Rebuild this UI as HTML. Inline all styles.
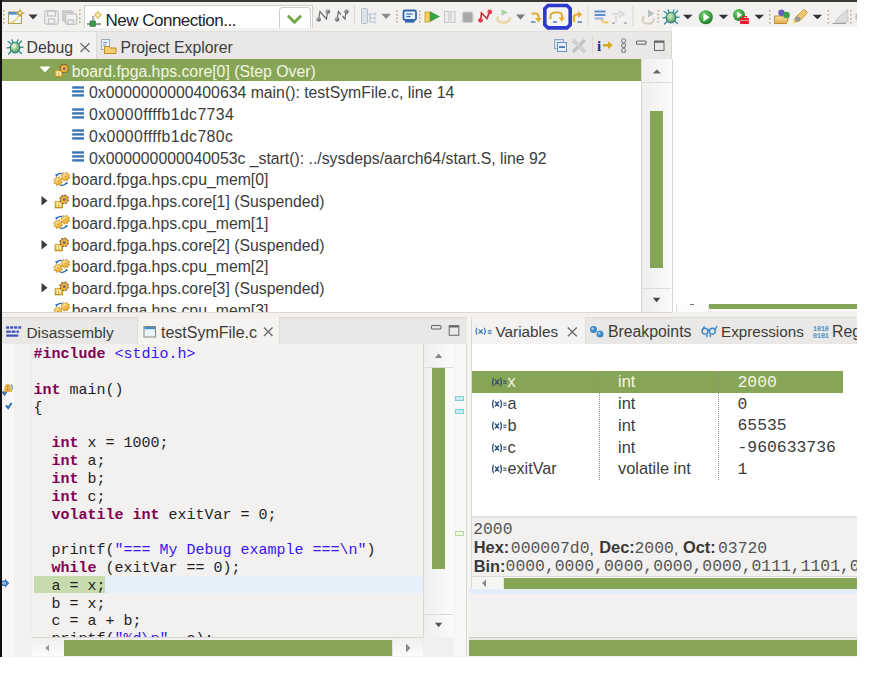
<!DOCTYPE html>
<html><head><meta charset="utf-8">
<style>
*{margin:0;padding:0;box-sizing:border-box}
html,body{width:875px;height:678px;overflow:hidden;background:#fff;position:relative}
body{font-family:"Liberation Sans",sans-serif;font-size:15.8px;color:#3c3c3c}
.a{position:absolute}
.ui{font-family:"Liberation Sans",sans-serif;font-size:15.8px;white-space:pre;line-height:18px}
.green{background:#87a556}
.cl{position:absolute;left:0;height:17.8px;line-height:17.8px;white-space:pre;font-family:"Liberation Mono",monospace;font-size:15px;color:#1f1f1f}
.kw{color:#7f0055;font-weight:bold}
.st{color:#3a14f0}
.dm{font-family:"Liberation Mono",monospace;font-size:16.4px;white-space:pre;line-height:18px;color:#555}
.db{font-family:"Liberation Sans",sans-serif;font-weight:bold;font-size:16.4px;white-space:pre;line-height:18px;color:#3a3a3a}
.dt{font-family:"Liberation Sans",sans-serif;font-size:15.2px;white-space:pre;line-height:18px;color:#3a3a3a}
.vm{font-family:"Liberation Mono",monospace;font-size:16.4px;white-space:pre;line-height:18px}
</style></head><body>
<svg width="0" height="0" style="position:absolute"><defs>
<radialGradient id="gold" cx="40%" cy="35%" r="70%"><stop offset="0" stop-color="#ffe9a0"/><stop offset="0.6" stop-color="#f0b830"/><stop offset="1" stop-color="#c98a10"/></radialGradient>
<linearGradient id="goldbox" x1="0" y1="0" x2="0" y2="1"><stop offset="0" stop-color="#f6d46a"/><stop offset="1" stop-color="#c9951c"/></linearGradient>
<symbol id="i-thread" viewBox="0 0 20 16">
 <rect x="5" y="8.2" width="7.7" height="6.8" fill="url(#goldbox)" stroke="#b08a20" stroke-width="0.6"/>
 <rect x="6.6" y="9.4" width="1.5" height="4.6" fill="#fff6c8"/><rect x="9.4" y="9.4" width="1.5" height="4.6" fill="#fff6c8"/>
 <polygon points="19.10,7.39 18.81,8.33 17.60,8.69 17.09,9.31 16.96,10.57 16.10,11.03 14.99,10.42 14.19,10.50 13.21,11.30 12.27,11.01 11.91,9.80 11.29,9.29 10.03,9.16 9.57,8.30 10.18,7.19 10.10,6.39 9.30,5.41 9.59,4.47 10.80,4.11 11.31,3.49 11.44,2.23 12.30,1.77 13.41,2.38 14.21,2.30 15.19,1.50 16.13,1.79 16.49,3.00 17.11,3.51 18.37,3.64 18.83,4.50 18.22,5.61 18.30,6.41" fill="#8a5e2a"/>
 <circle cx="14.2" cy="6.4" r="3.5" fill="#f2b640"/>
 <circle cx="14.2" cy="6.4" r="1.5" fill="#7a6a6a"/>
</symbol>
<symbol id="i-frame" viewBox="0 0 20 16">
 <rect x="2.2" y="2.3" width="11.8" height="2.4" fill="#3b74b4"/>
 <rect x="2.2" y="6.2" width="11.8" height="2.4" fill="#3b74b4"/>
 <rect x="2.2" y="10.2" width="11.8" height="2.4" fill="#3b74b4"/>
</symbol>
<symbol id="i-mem" viewBox="-2 0 20 16">
 <path d="M4.5 4.5 Q7 1.8 10.5 2.6" fill="none" stroke="#2f6db5" stroke-width="1.4"/>
 <polygon points="3,3.5 6,3 4.6,6" fill="#2f6db5"/>
 <path d="M8.5 14.3 Q12.5 15 14.5 11.8" fill="none" stroke="#2f6db5" stroke-width="1.4"/>
 <polygon points="16,12.8 13,13.4 14.6,10.4" fill="#2f6db5"/>
 <polygon points="17.81,6.49 17.55,7.34 16.14,7.44 15.72,7.94 15.89,9.35 15.11,9.76 14.03,8.84 13.39,8.90 12.51,10.01 11.66,9.75 11.56,8.34 11.06,7.92 9.65,8.09 9.24,7.31 10.16,6.23 10.10,5.59 8.99,4.71 9.25,3.86 10.66,3.76 11.08,3.26 10.91,1.85 11.69,1.44 12.77,2.36 13.41,2.30 14.29,1.19 15.14,1.45 15.24,2.86 15.74,3.28 17.15,3.11 17.56,3.89 16.64,4.97 16.70,5.61" fill="url(#gold)" stroke="#c08a30" stroke-width="0.6"/>
 <circle cx="13.4" cy="5.6" r="1" fill="#d9a040"/>
 <polygon points="10.51,11.09 10.25,11.94 8.84,12.04 8.42,12.54 8.59,13.95 7.81,14.36 6.73,13.44 6.09,13.50 5.21,14.61 4.36,14.35 4.26,12.94 3.76,12.52 2.35,12.69 1.94,11.91 2.86,10.83 2.80,10.19 1.69,9.31 1.95,8.46 3.36,8.36 3.78,7.86 3.61,6.45 4.39,6.04 5.47,6.96 6.11,6.90 6.99,5.79 7.84,6.05 7.94,7.46 8.44,7.88 9.85,7.71 10.26,8.49 9.34,9.57 9.40,10.21" fill="url(#gold)" stroke="#c08a30" stroke-width="0.6"/>
 <circle cx="6.1" cy="10.2" r="1" fill="#d9a040"/>
</symbol>
<symbol id="i-var" viewBox="0 0 18 12">
 <path d="M2.6 1.8 Q0.6 6 2.6 10.2 M9.4 1.8 Q11.4 6 9.4 10.2 M4 3.5 L8 8.5 M8 3.5 L4 8.5" stroke="#34507a" stroke-width="1.3" fill="none"/>
 <rect x="12.3" y="4.6" width="3.2" height="1.1" fill="#34507a"/><rect x="12.3" y="6.7" width="3.2" height="1.1" fill="#34507a"/>
</symbol>
<symbol id="i-vars" viewBox="0 0 18 12">
 <path d="M2.6 1.8 Q0.6 6 2.6 10.2 M9.4 1.8 Q11.4 6 9.4 10.2 M4 3.5 L8 8.5 M8 3.5 L4 8.5" stroke="#3a5070" stroke-width="1.3" fill="none"/>
 <rect x="12.3" y="4.6" width="3.2" height="1.1" fill="#3a5070"/><rect x="12.3" y="6.7" width="3.2" height="1.1" fill="#3a5070"/>
</symbol>
</defs></svg>
<!-- top dark border -->
<div class="a" style="left:0;top:0;width:857px;height:2px;background:#3a3935"></div>
<!-- window bg -->
<div class="a" style="left:0;top:2px;width:857px;height:25px;background:#f2f1f0"></div>
<div class="a" style="left:0;top:27px;width:672px;height:290px;background:#f2f1f0"></div>
<div class="a" style="left:0;top:311px;width:857px;height:346px;background:#f2f1f0"></div>
<!-- left dark border -->
<div class="a" style="left:0;top:0;width:1.8px;height:657px;background:#111"></div>

<svg class="a" style="left:0;top:0" width="875" height="32">
<defs>
<linearGradient id="gball" x1="0" y1="0" x2="1" y2="1"><stop offset="0" stop-color="#cfcfcf"/><stop offset="1" stop-color="#4a4a4a"/></linearGradient>
<radialGradient id="grun" cx="40%" cy="35%" r="70%"><stop offset="0" stop-color="#7fd27a"/><stop offset="0.7" stop-color="#2f9a3a"/><stop offset="1" stop-color="#1c6e26"/></radialGradient>
<linearGradient id="gfold" x1="0" y1="0" x2="0" y2="1"><stop offset="0" stop-color="#fbe3a0"/><stop offset="1" stop-color="#e3aa4a"/></linearGradient>
<radialGradient id="gbug2" cx="40%" cy="35%" r="70%"><stop offset="0" stop-color="#d8f0c0"/><stop offset="1" stop-color="#4a9a60"/></radialGradient>
</defs>
<!-- grip dots -->
<g fill="#bcae8c">
<rect x="3" y="10" width="1.6" height="1.6"/><rect x="3" y="14" width="1.6" height="1.6"/><rect x="3" y="18" width="1.6" height="1.6"/><rect x="3" y="22" width="1.6" height="1.6"/>
<rect x="79" y="9.5" width="1.6" height="1.6"/><rect x="79" y="13.5" width="1.6" height="1.6"/><rect x="79" y="17.5" width="1.6" height="1.6"/><rect x="79" y="21.5" width="1.6" height="1.6"/>
<rect x="396" y="10.5" width="1.6" height="1.6"/><rect x="396" y="14" width="1.6" height="1.6"/><rect x="396" y="17.5" width="1.6" height="1.6"/><rect x="396" y="21" width="1.6" height="1.6"/>
<rect x="419" y="10.5" width="1.6" height="1.6"/><rect x="419" y="14" width="1.6" height="1.6"/><rect x="419" y="17.5" width="1.6" height="1.6"/><rect x="419" y="21" width="1.6" height="1.6"/>
<rect x="657.5" y="10" width="1.6" height="1.6"/><rect x="657.5" y="13.7" width="1.6" height="1.6"/><rect x="657.5" y="17.4" width="1.6" height="1.6"/><rect x="657.5" y="21" width="1.6" height="1.6"/>
<rect x="769" y="10" width="1.6" height="1.6"/><rect x="769" y="14" width="1.6" height="1.6"/><rect x="769" y="18" width="1.6" height="1.6"/><rect x="769" y="22" width="1.6" height="1.6"/>
<rect x="827.5" y="10" width="1.6" height="1.6"/><rect x="827.5" y="14" width="1.6" height="1.6"/><rect x="827.5" y="18" width="1.6" height="1.6"/><rect x="827.5" y="22" width="1.6" height="1.6"/>
<rect x="850" y="10" width="1.6" height="1.6"/><rect x="850" y="14" width="1.6" height="1.6"/><rect x="850" y="18" width="1.6" height="1.6"/><rect x="850" y="22" width="1.6" height="1.6"/>
</g>
<!-- separators -->
<rect x="354" y="5" width="1" height="20" fill="#dcd9d4"/>
<rect x="587.5" y="6" width="1" height="20" fill="#dcd9d4"/>
<rect x="632.5" y="6" width="1" height="20" fill="#dcd9d4"/>
<!-- new window -->
<rect x="8.5" y="12" width="13" height="11.5" fill="#eef6fd" stroke="#b09a5a" stroke-width="1"/>
<rect x="9" y="12" width="12" height="2.6" fill="#4a90d9"/>
<path d="M10 23 Q17 21 19 15" stroke="#f1d27a" stroke-width="1.6" fill="none"/>
<path d="M20 9.7 Q20.6 12.4 23 13.1 Q20.6 13.8 20 16.5 Q19.4 13.8 17 13.1 Q19.4 12.4 20 9.7 Z" fill="#fbf0c0" stroke="#c8a23a" stroke-width="1.2"/>
<polygon points="28.5,14.6 37.7,14.6 33.1,19.4" fill="#3c3c3c"/>
<!-- save (disabled) -->
<g fill="none" stroke="#c4c4c4" stroke-width="1.3">
<rect x="44.7" y="10.8" width="13.6" height="13.3" rx="1.5"/>
<rect x="47.5" y="11" width="8" height="5"/>
<rect x="48.5" y="19" width="6" height="5"/>
<rect x="65.7" y="13.8" width="11" height="10.5" rx="1.3"/>
<path d="M62.7 21 V10.8 H72.5 M64.2 22.5 V12.3 H74"/>
<rect x="68" y="20" width="5.5" height="4.3"/>
</g>
<!-- connect icons -->
<path d="M318.5 19.5 L320 11.5 L326.5 19 L327.5 11.5" stroke="#6a6a6a" stroke-width="1.2" fill="none"/>
<circle cx="318.5" cy="19.3" r="2.4" fill="url(#gball)"/><circle cx="327.8" cy="11.6" r="2.4" fill="url(#gball)"/>
<path d="M337 19.5 L338.5 11.5 L341 15 M342.5 16 L345 19 L346 11.5" stroke="#6a6a6a" stroke-width="1.2" fill="none"/>
<circle cx="337" cy="19.3" r="2.4" fill="url(#gball)"/><circle cx="346.3" cy="11.6" r="2.4" fill="url(#gball)"/>
<!-- hierarchy disabled -->
<rect x="361.5" y="8.5" width="6" height="15" rx="1" fill="#dde3ea" stroke="#b7c1cc" stroke-width="1"/>
<path d="M367.5 14 H374 M370 14 V22 H374 M370 18 H374" stroke="#b7c1d6" stroke-width="1.2" fill="none"/>
<circle cx="375" cy="14" r="1.5" fill="#c9d2e6"/><circle cx="375" cy="18" r="1.5" fill="#c9d2e6"/><circle cx="375" cy="22" r="1.5" fill="#c9d2e6"/>
<polygon points="381.3,13.7 391,13.7 386.1,19.1" fill="#8a8a8a"/>
<!-- monitor -->
<rect x="403.5" y="10.5" width="12.5" height="9.5" rx="1.5" fill="#e9f1fb" stroke="#3467ad" stroke-width="1.8"/>
<rect x="406.5" y="13.5" width="6" height="1.2" fill="#3467ad"/><rect x="406.5" y="16" width="4" height="1.2" fill="#3467ad"/>
<rect x="405" y="21" width="9.5" height="1.6" fill="#3467ad"/>
<!-- resume -->
<rect x="425" y="12" width="4.5" height="10" fill="#f3d35c" stroke="#c59a2a" stroke-width="0.8"/>
<polygon points="430,11.3 440,16.6 430,22" fill="#35a345"/>
<!-- suspend disabled -->
<rect x="444.5" y="11.5" width="4.3" height="11" fill="#ececec" stroke="#c8c8c8"/>
<rect x="450.8" y="11.5" width="4.3" height="11" fill="#ececec" stroke="#c8c8c8"/>
<!-- terminate disabled -->
<rect x="462.5" y="12" width="10.5" height="10.5" rx="2" fill="#a9a9a9" stroke="#cfcfcf" stroke-width="1.2"/>
<!-- disconnect red -->
<path d="M480.5 20.5 L481.5 13 L487 18.5 L489.5 12" stroke="#d0303a" stroke-width="1.7" fill="none"/>
<circle cx="480.5" cy="20.3" r="2.4" fill="#e0404a"/><circle cx="489.8" cy="12" r="2.4" fill="#e0404a"/>
<!-- restart (pale) -->
<polygon points="501.5,9.5 508,12.5 501.5,15.5" fill="#9ed3a0"/>
<path d="M498 16.5 Q496 22.5 503 22.5 Q510 22.5 510 17" stroke="#e9d6a0" stroke-width="2.4" fill="none"/>
<polygon points="516,14.6 525,14.6 520.5,19.8" fill="#7a7a7a"/>
<!-- step into -->
<path d="M531.5 13.5 H535.5 Q538.5 13.5 538.5 16.5 V19" stroke="#e2ad3a" stroke-width="2.2" fill="none"/>
<polygon points="535,18 542,18 538.5,22.3" fill="#e2ad3a"/>
<rect x="531" y="21.3" width="4.5" height="1.4" fill="#4a78b8"/>
<!-- step over highlight box -->
<path d="M548 5.5 H567 L570.2 8.7 V24.7 L567 27.9 H548 L544.8 24.7 V8.7 Z" fill="#f5f5f5" stroke="#2f38cc" stroke-width="3.6"/>
<path d="M550.5 19 V16 Q550.5 12.5 555.5 12.5 H558 Q562 12.5 562 16 V18" stroke="#e2ad3a" stroke-width="2.2" fill="none"/>
<polygon points="558.5,17.5 565.2,17.5 561.8,21.8" fill="#e2ad3a"/>
<rect x="553" y="21.3" width="4" height="1.4" fill="#4a78b8"/>
<!-- step return -->
<path d="M574 22 V17 Q574 14.5 577 14.5 H578.5" stroke="#e2ad3a" stroke-width="2.2" fill="none"/>
<polygon points="578,11.2 582.3,14.6 578,18" fill="#e2ad3a"/>
<rect x="577.5" y="21.3" width="4.5" height="1.4" fill="#4a78b8"/>
<!-- instruction stepping -->
<rect x="594.5" y="10.5" width="11" height="2" fill="#5b8ed0"/><rect x="594.5" y="14" width="11" height="2" fill="#5b8ed0"/><rect x="594.5" y="17.5" width="9" height="2" fill="#8fb4e0"/>
<path d="M601 19.5 Q604 24 608.5 22" stroke="#f0c870" stroke-width="2" fill="none"/>
<!-- step filters disabled -->
<path d="M612 14 H620 M616 14 V22 M619 11 L624 14 L619 17" stroke="#d8d8d8" stroke-width="1.6" fill="none"/>
<rect x="612" y="22.5" width="3" height="1.2" fill="#9a9a9a"/><rect x="624" y="22.5" width="3" height="1.2" fill="#9a9a9a"/>
<!-- restart disabled -->
<polygon points="648,9.6 654.5,13.5 648,17.4" fill="#b8c0c0"/>
<path d="M644 16 Q640 23 647 23.5 Q654 24 654 18.5" stroke="#d8d0c0" stroke-width="2.2" fill="none"/>
<!-- debug bug -->
<g stroke="#2d8f9a" stroke-width="1.3" stroke-linecap="round" fill="none">
<path d="M667 13.5 L664 11.5 M666 17.5 L663 17.8 M667 21.3 L664.5 24 M675 13.5 L677.5 11 M676 17.5 L679 17.2 M675 21.3 L677.5 23.5 M669 12.5 L668 9.8 M673 12.5 L674 9.8"/>
</g>
<ellipse cx="671" cy="17.6" rx="4.8" ry="5.3" fill="url(#gbug2)" stroke="#2f7f80" stroke-width="1.1"/>
<polygon points="683,14.8 692.6,14.8 687.8,19.2" fill="#333"/>
<!-- run -->
<circle cx="705.8" cy="17.2" r="7" fill="url(#grun)"/>
<polygon points="703.5,13 703.5,21.4 709.5,17.2" fill="#fff"/>
<polygon points="718.7,14.8 728.3,14.8 723.5,19.2" fill="#333"/>
<!-- external tools -->
<circle cx="739" cy="15" r="6" fill="url(#grun)"/>
<polygon points="737.3,11.8 737.3,18.2 742,15" fill="#fff"/>
<rect x="740" y="18" width="9" height="6" rx="1" fill="#d8232a"/>
<rect x="742.5" y="16.5" width="4" height="2" fill="none" stroke="#d8232a" stroke-width="1"/>
<rect x="740" y="20" width="9" height="0.8" fill="#fff" opacity="0.6"/>
<polygon points="754.5,14.8 764,14.8 759.2,19.2" fill="#333"/>
<!-- folder w balls -->
<path d="M774.5 16 H789 L786.5 23.5 H774.5 Z" fill="url(#gfold)" stroke="#c48a30" stroke-width="1"/>
<circle cx="781.5" cy="12.8" r="3.2" fill="#6a5cc0"/>
<circle cx="786.5" cy="15" r="3.2" fill="#3aa04a"/>
<!-- pen -->
<path d="M793 23 L796 17 L804 9.5 L807.5 12.5 L800 20.5 Z" fill="#f2c873" stroke="#c8922e" stroke-width="1"/>
<circle cx="797.8" cy="19" r="2.6" fill="#9a9a9a"/>
<path d="M791.5 24.5 L794 21" stroke="#fff3b0" stroke-width="2.5"/>
<polygon points="812.6,14.8 822.2,14.8 817.4,19.2" fill="#333"/>
<!-- pen disabled -->
<path d="M834 23.5 L838 18 L847.5 9.5 L848 22 Z" fill="#dcdcdc" stroke="#c8c8c8" stroke-width="1"/>
<path d="M832.5 23.5 H846" stroke="#a0a0a0" stroke-width="1"/>
<rect x="855.5" y="13.5" width="1.5" height="6" fill="#bbb"/>
</svg>
<!-- combo -->
<div class="a" style="left:84px;top:5px;width:229px;height:22.5px;background:#fff;border:1px solid #d3d0cb;border-bottom:none"></div>
<div class="a" style="left:279.2px;top:7px;width:31.6px;height:20.5px;background:#fff;border:1.2px solid #cdcdcd;border-bottom:none;border-radius:4px 4px 0 0"></div>
<svg class="a" style="left:86px;top:10px" width="18" height="18">
<rect x="1" y="13" width="14" height="2.2" fill="#9c9c9c"/>
<rect x="6" y="6" width="2.5" height="8" fill="#b8b8b8"/>
<rect x="4" y="11" width="5.5" height="5.5" fill="#3a9a4a" stroke="#2a7a3a" stroke-width="0.6"/>
<path d="M12 1.5 L15.2 5 L12 8.5 L8.8 5 Z" fill="#f7e7a8" stroke="#c8a23a" stroke-width="1"/>
</svg>
<div class="a" style="left:105.5px;top:10.8px;font-size:17px;letter-spacing:-0.5px;line-height:20px;color:#1e1e1e;white-space:pre">New Connection...</div>
<svg class="a" style="left:286px;top:14px" width="18" height="12"><path d="M2.7 2.5 L8.5 8.3 L14.3 2.5" stroke="#74a64a" stroke-width="3" stroke-linecap="round" stroke-linejoin="round" fill="none"/></svg>


<!-- DEBUG PANEL -->
<div class="a" style="left:2px;top:31.3px;width:670px;height:27.7px;background:#e9e8e6;border-top:1px solid #e0deda;border-right:1.5px solid #d8d6d3"></div>
<div class="a" style="left:2px;top:32.3px;width:95px;height:26.7px;background:#f3f2f1;border-right:1px solid #dddbd8"></div>
<div class="a ui" style="left:26.5px;top:39px">Debug</div>
<div class="a ui" style="left:120.5px;top:39px">Project Explorer</div>
<!--DEBUGTABS-->
<!-- tree -->
<div class="a" style="left:2px;top:59px;width:640px;height:253px;background:#fff;overflow:hidden">
<div class="a green" style="left:0;top:0.20px;width:640px;height:21.5px"></div>
<svg class="a" style="left:35.5px;top:7.20px" width="14" height="8"><polygon points="1.5,0.5 12.5,0.5 7,6.5" fill="#fff"/></svg>
<svg class="a" style="left:48px;top:3.20px" width="20" height="16"><use href="#i-thread"/></svg>
<div class="a ui tr" style="left:69.7px;top:3.70px;color:#f4f6e2;">board.fpga.hps.core[0] (Step Over)</div>
<svg class="a" style="left:68.3px;top:24.95px" width="20" height="16"><use href="#i-frame"/></svg>
<div class="a ui tr" style="left:87px;top:25.45px;color:#3c3c3c;">0x0000000000400634 main(): testSymFile.c, line 14</div>
<svg class="a" style="left:68.3px;top:46.70px" width="20" height="16"><use href="#i-frame"/></svg>
<div class="a ui tr" style="left:87px;top:47.20px;color:#3c3c3c;letter-spacing:0.4px;">0x0000ffffb1dc7734</div>
<svg class="a" style="left:68.3px;top:68.45px" width="20" height="16"><use href="#i-frame"/></svg>
<div class="a ui tr" style="left:87px;top:68.95px;color:#3c3c3c;letter-spacing:0.4px;">0x0000ffffb1dc780c</div>
<svg class="a" style="left:68.3px;top:90.20px" width="20" height="16"><use href="#i-frame"/></svg>
<div class="a ui tr" style="left:87px;top:90.70px;color:#3c3c3c;">0x000000000040053c _start(): ../sysdeps/aarch64/start.S, line 92</div>
<svg class="a" style="left:48px;top:111.95px" width="20" height="16"><use href="#i-mem"/></svg>
<div class="a ui tr" style="left:69.7px;top:112.45px;color:#3c3c3c;">board.fpga.hps.cpu_mem[0]</div>
<svg class="a" style="left:37.5px;top:136.20px" width="10" height="12"><polygon points="1.5,1 7.5,5.8 1.5,10.6" fill="#3c3c3c"/></svg>
<svg class="a" style="left:48px;top:133.70px" width="20" height="16"><use href="#i-thread"/></svg>
<div class="a ui tr" style="left:69.7px;top:134.20px;color:#3c3c3c;">board.fpga.hps.core[1] (Suspended)</div>
<svg class="a" style="left:48px;top:155.45px" width="20" height="16"><use href="#i-mem"/></svg>
<div class="a ui tr" style="left:69.7px;top:155.95px;color:#3c3c3c;">board.fpga.hps.cpu_mem[1]</div>
<svg class="a" style="left:37.5px;top:179.70px" width="10" height="12"><polygon points="1.5,1 7.5,5.8 1.5,10.6" fill="#3c3c3c"/></svg>
<svg class="a" style="left:48px;top:177.20px" width="20" height="16"><use href="#i-thread"/></svg>
<div class="a ui tr" style="left:69.7px;top:177.70px;color:#3c3c3c;">board.fpga.hps.core[2] (Suspended)</div>
<svg class="a" style="left:48px;top:198.95px" width="20" height="16"><use href="#i-mem"/></svg>
<div class="a ui tr" style="left:69.7px;top:199.45px;color:#3c3c3c;">board.fpga.hps.cpu_mem[2]</div>
<svg class="a" style="left:37.5px;top:223.20px" width="10" height="12"><polygon points="1.5,1 7.5,5.8 1.5,10.6" fill="#3c3c3c"/></svg>
<svg class="a" style="left:48px;top:220.70px" width="20" height="16"><use href="#i-thread"/></svg>
<div class="a ui tr" style="left:69.7px;top:221.20px;color:#3c3c3c;">board.fpga.hps.core[3] (Suspended)</div>
<svg class="a" style="left:48px;top:242.45px" width="20" height="16"><use href="#i-mem"/></svg>
<div class="a ui tr" style="left:69.7px;top:242.95px;color:#3c3c3c;">board.fpga.hps.cpu_mem[3]</div>

</div>
<!-- debug scrollbar -->
<div class="a" style="left:641px;top:59px;width:31.5px;height:253px;background:linear-gradient(90deg,#eeeeed,#fbfbfb);border-left:1px solid #dcdad7;border-right:1.5px solid #d8d6d3"></div>
<div class="a" style="left:642px;top:82.3px;width:29px;height:1px;background:#dddbd8"></div>
<div class="a" style="left:642px;top:288px;width:29px;height:1px;background:#dddbd8"></div>
<svg class="a" style="left:650px;top:67px" width="14" height="8"><polygon points="2.8,6.6 11,6.6 6.9,2.6" fill="#666"/></svg>
<svg class="a" style="left:650px;top:296px" width="14" height="8"><polygon points="2.9,1.7 10.3,1.7 6.6,6.3" fill="#444"/></svg>
<div class="a green" style="left:650px;top:111px;width:13px;height:157px"></div>

<div class="a" style="left:2px;top:311.5px;width:670px;height:1.2px;background:#dcd9d5"></div>
<!-- EDITOR PANEL -->
<div class="a" style="left:2px;top:317px;width:465px;height:27px;background:#e9e8e6;border-top:1px solid #dcdad7"></div>
<div class="a" style="left:137px;top:317px;width:143px;height:27px;background:#f4f3f2;border-left:1px solid #dddbd8;border-right:1px solid #dddbd8"></div>
<div class="a ui" style="left:26.5px;top:324px;font-size:15.4px">Disassembly</div>
<div class="a ui" style="left:161px;top:324px;font-size:16px">testSymFile.c</div>
<!--EDITORTABS-->
<div class="a" style="left:2px;top:344px;width:12px;height:313px;background:#f7f7f6"></div>
<div class="a" style="left:31px;top:344px;width:1px;height:293px;background:#ecebea"></div>
<div class="a" style="left:34px;top:575.7px;width:71px;height:17.8px;background:#c6dcad"></div>
<div class="a" style="left:105px;top:575.7px;width:319px;height:17.8px;background:#e6f0fb"></div>
<div class="a" style="left:33.5px;top:344px;width:390px;height:293px;overflow:hidden">
<div class="cl" style="top:2.30px"><b class="kw">#include</b> <span class="st">&lt;stdio.h&gt;</span></div>
<div class="cl" style="top:20.10px"></div>
<div class="cl" style="top:37.90px"><b class="kw">int</b> main()</div>
<div class="cl" style="top:55.70px">{</div>
<div class="cl" style="top:73.50px"></div>
<div class="cl" style="top:91.30px">  <b class="kw">int</b> x = 1000;</div>
<div class="cl" style="top:109.10px">  <b class="kw">int</b> a;</div>
<div class="cl" style="top:126.90px">  <b class="kw">int</b> b;</div>
<div class="cl" style="top:144.70px">  <b class="kw">int</b> c;</div>
<div class="cl" style="top:162.50px">  <b class="kw">volatile</b> <b class="kw">int</b> exitVar = 0;</div>
<div class="cl" style="top:180.30px"></div>
<div class="cl" style="top:198.10px">  printf(<span class="st">"=== My Debug example ===\n"</span>)</div>
<div class="cl" style="top:215.90px">  <b class="kw">while</b> (exitVar == 0);</div>
<div class="cl" style="top:233.70px">  a = x;</div>
<div class="cl" style="top:251.50px">  b = x;</div>
<div class="cl" style="top:269.30px">  c = a + b;</div>
<div class="cl" style="top:287.10px">  printf(<span class="st">"%d\n"</span>, c);</div>

</div>
<svg class="a" style="left:0;top:375px" width="32" height="220" viewBox="0 375 32 220">
<path d="M2.5 391.5 L4.5 394.5 L7 390.5" stroke="#2f6bb0" stroke-width="2" fill="none"/>
<path d="M11 384.5 Q13.5 387 11.5 390" stroke="#7aa8d8" stroke-width="1.5" fill="none"/>
<path d="M7.6 384 Q10 384 10.5 387 L11.7 391.5 H4 L5 387 Q5.5 384 7.6 384 Z" fill="#eab84a" stroke="#d4a030" stroke-width="0.6"/>
<rect x="7" y="386" width="1.3" height="1.3" fill="#9a7020"/><rect x="7" y="389" width="1.3" height="1.3" fill="#9a7020"/>
<path d="M6 405.3 L8.2 408 L11.5 403" stroke="#2f6bb0" stroke-width="2" fill="none"/>
<path d="M2 580.5 H5 V578.8 L9.3 583.2 L5 587.7 V586 H2 Z" fill="#3a7cc4"/>
<rect x="2" y="582" width="4" height="2.4" fill="#8ab8e8"/>
</svg>

<!-- editor vscroll -->
<div class="a" style="left:423px;top:344px;width:30px;height:293px;background:linear-gradient(90deg,#eeeeed,#fbfbfb);border-left:1.6px solid #d8d6d3"></div>
<div class="a" style="left:424.6px;top:367px;width:28.4px;height:1px;background:#dddbd8"></div>
<div class="a" style="left:424.6px;top:613.5px;width:28.4px;height:1px;background:#dddbd8"></div>
<svg class="a" style="left:432px;top:351px" width="14" height="8"><polygon points="3,7 10.2,7 6.6,2.6" fill="#888"/></svg>
<svg class="a" style="left:432px;top:621px" width="14" height="8"><polygon points="3,1.8 10.2,1.8 6.6,6.2" fill="#555"/></svg>
<div class="a green" style="left:432.3px;top:367.5px;width:12.7px;height:201.5px"></div>
<!-- overview ruler -->
<div class="a" style="left:453px;top:344px;width:13.5px;height:312px;background:#f7f7f6;border-right:1.2px solid #d8d6d3"></div>
<div class="a" style="left:455px;top:395.5px;width:9px;height:5.5px;background:#c8ecf0;border:1px solid #7ecfd8"></div>
<div class="a" style="left:455px;top:408.5px;width:9px;height:5.5px;background:#c8ecf0;border:1px solid #7ecfd8"></div>
<div class="a" style="left:455px;top:531px;width:9px;height:4.5px;background:#eef6e4;border:1px solid #bcd8a0"></div>
<!-- editor hscroll -->
<div class="a" style="left:32px;top:637px;width:392px;height:19px;background:linear-gradient(180deg,#efefee,#fcfcfc);border-top:1px solid #d8d6d3"></div>
<div class="a" style="left:63.5px;top:638px;width:1px;height:18.5px;background:#e6e4e1"></div>
<div class="a" style="left:392px;top:638px;width:1px;height:18.5px;background:#e6e4e1"></div>
<svg class="a" style="left:43px;top:642px" width="8" height="12"><polygon points="6,2.5 6,9.5 2.2,6" fill="#9a9a9a"/></svg>
<svg class="a" style="left:404px;top:642px" width="8" height="12"><polygon points="2,1.5 2,10.5 6.5,6" fill="#888"/></svg>
<div class="a green" style="left:64px;top:640px;width:328px;height:15.8px"></div>
<div class="a" style="left:423px;top:637.5px;width:30px;height:18.5px;background:#efefee"></div>

<!-- sash -->
<div class="a" style="left:466.5px;top:317px;width:4.5px;height:339px;background:#f5f4f3"></div>

<!-- VARIABLES PANEL -->
<div class="a" style="left:471px;top:317px;width:386px;height:27px;background:#e9e8e6;border-top:1px solid #dcdad7;border-left:1px solid #dcdad7"></div>
<div class="a" style="left:471px;top:317px;width:115px;height:27px;background:#f4f3f2;border-left:1px solid #dcdad7;border-right:1px solid #dddbd8"></div>
<svg class="a" style="left:0;top:30px" width="875" height="320" viewBox="0 30 875 320">
<defs>
<radialGradient id="gbug" cx="40%" cy="35%" r="70%"><stop offset="0" stop-color="#d8f0c0"/><stop offset="1" stop-color="#4a9a60"/></radialGradient>
</defs>
<!-- debug tab bug -->
<g stroke="#2f8a8a" stroke-width="1.3" stroke-linecap="round" fill="none">
<path d="M11 43.5 L8 41.5 M10 47.5 L7 47.8 M11 51.3 L8.5 54 M19 43.5 L21.5 41 M20 47.5 L23 47.2 M19 51.3 L21.5 53.5 M13 42.5 L12 39.8 M17 42.5 L18 39.8"/>
</g>
<ellipse cx="15" cy="47.6" rx="4.8" ry="5.3" fill="url(#gbug)" stroke="#2f7f80" stroke-width="1.1"/>
<ellipse cx="14" cy="46.3" rx="1.8" ry="2.2" fill="#e8f6d8" opacity="0.8"/>
<!-- close X -->
<path d="M80.5 43.3 L89.5 52 M89.5 43.3 L80.5 52" stroke="#6a6a6a" stroke-width="1.3"/>
<!-- project explorer icon -->
<rect x="101.5" y="39.5" width="8" height="10" fill="#eef3fa" stroke="#9aa8b8" stroke-width="1"/>
<rect x="103" y="42" width="4" height="1" fill="#6a8ac0"/><rect x="103" y="44.5" width="3" height="1" fill="#6a8ac0"/>
<path d="M104.5 46.5 H109 L110.5 48 H116 V53.5 H104.5 Z" fill="#f6cf6a" stroke="#c08a2a" stroke-width="1"/>
<!-- debug panel toolbar -->
<rect x="554.5" y="39.5" width="9" height="9" fill="#d6e4f4" stroke="#8aa6c8" stroke-width="1"/>
<rect x="557.5" y="42.5" width="9" height="9" fill="#e6f0fb" stroke="#6f93c0" stroke-width="1"/>
<rect x="559" y="46.3" width="6" height="1.6" fill="#3a6ab0"/>
<path d="M573 40 L585 52 M585 40 L573 52" stroke="#c4c4c4" stroke-width="3.2"/>
<path d="M573 40 L585 52" stroke="#dadada" stroke-width="1.2"/>
<rect x="592" y="36" width="1" height="19" fill="#dcdad7"/>
<text x="597" y="50.5" font-family="Liberation Serif" font-weight="bold" font-size="15" fill="#2a2a9a">i</text>
<path d="M603 45.3 H609" stroke="#d4a820" stroke-width="2.4"/>
<polygon points="608,41.5 613,45.3 608,49" fill="#d4a820"/>
<g fill="none" stroke="#8a8a8a" stroke-width="1.1"><circle cx="623.6" cy="40.8" r="2"/><circle cx="623.6" cy="45.6" r="2"/><circle cx="623.6" cy="50.5" r="2"/></g>
<rect x="636.5" y="41" width="9.5" height="3.3" rx="1" fill="none" stroke="#666" stroke-width="1.05"/>
<rect x="654.5" y="41" width="9.5" height="9.5" fill="none" stroke="#666" stroke-width="1"/>
<rect x="654.5" y="41" width="9.5" height="1.8" fill="#666"/>
<!-- editor tabs -->
<g fill="#3a50c0">
<rect x="6.2" y="326.3" width="3" height="2.4"/><rect x="10.2" y="326.3" width="3" height="2.4"/><rect x="14.2" y="326.3" width="3" height="2.4"/><rect x="18.2" y="326.3" width="3" height="2.4"/>
<rect x="6.2" y="330.6" width="4.5" height="2.2"/><rect x="11.5" y="330.6" width="4" height="2.2"/><rect x="16.5" y="330.6" width="2.5" height="2.2"/>
<rect x="6.2" y="334.5" width="12" height="2.2"/>
</g>
<rect x="144" y="326.5" width="11.5" height="10.5" fill="#eaf4fd" stroke="#8a8a7a" stroke-width="1"/>
<rect x="144.5" y="327" width="10.5" height="2.2" fill="#4a88d0"/>
<path d="M264 327.5 L272.5 336 M272.5 327.5 L264 336" stroke="#6a6a6a" stroke-width="1.3"/>
<rect x="431.5" y="325.5" width="9.5" height="3.5" rx="1" fill="none" stroke="#666" stroke-width="1.05"/>
<rect x="449.2" y="325.7" width="9.6" height="9.6" fill="none" stroke="#666" stroke-width="1"/>
<rect x="449.2" y="325.7" width="9.6" height="1.8" fill="#666"/>
<!-- variables tabs -->
<path d="M477 327.8 Q475 331.3 477 334.8 M484.3 327.8 Q486.3 331.3 484.3 334.8 M478.5 329.3 L482.8 333.5 M482.8 329.3 L478.5 333.5" stroke="#3a78c0" stroke-width="1.05" fill="none"/>
<rect x="487.8" y="330.3" width="3.8" height="1.2" fill="#3a78c0"/><rect x="487.8" y="332.6" width="3.8" height="1.2" fill="#3a78c0"/>
<path d="M567.8 327.5 L576.8 336.3 M576.8 327.5 L567.8 336.3" stroke="#6a6a6a" stroke-width="1.3"/>
<circle cx="593.5" cy="329.5" r="3.5" fill="#3f88c8"/><circle cx="600" cy="334" r="3.5" fill="#3f88c8"/>
<circle cx="592.7" cy="328.7" r="1.2" fill="#a8d0f0"/><circle cx="599.2" cy="333.2" r="1.2" fill="#a8d0f0"/>
<g stroke="#3a88c8" stroke-width="1.4" fill="none">
<circle cx="705" cy="331.2" r="2.9"/><circle cx="712.3" cy="331.2" r="2.9"/><path d="M707.6 330.3 Q708.6 329.3 709.7 330.3 M702.3 330 L704.5 326.3 M715 330 L717 326"/>
</g>
<g fill="#3a88c8"><rect x="706" y="334.6" width="1.6" height="1.6"/><rect x="709.5" y="334.6" width="1.6" height="1.6"/><rect x="706" y="336.3" width="1.6" height="0.9"/><rect x="709.5" y="336.3" width="1.6" height="0.9"/></g>
<text x="813" y="331.3" font-family="Liberation Mono" font-size="6.6" fill="#3a88c8" stroke="#3a88c8" stroke-width="0.2">1010</text>
<text x="813" y="337.5" font-family="Liberation Mono" font-size="6.6" fill="#3a88c8" stroke="#3a88c8" stroke-width="0.2">0101</text>
</svg>
<div class="a ui" style="left:495.5px;top:323px;font-size:15.3px">Variables</div>
<div class="a ui" style="left:608px;top:323px">Breakpoints</div>
<div class="a ui" style="left:721px;top:323px;font-size:15.2px">Expressions</div>
<div class="a" style="left:832px;top:317px;width:25px;height:27px;overflow:hidden"><div class="a ui" style="left:0;top:6px">Registers</div></div>

<div class="a" style="left:471px;top:344px;width:386px;height:171.5px;background:#fff;border-left:1px solid #dcdad7"></div>
<div class="a green" style="left:472px;top:371.40px;width:371px;height:21.2px"></div>
<svg class="a" style="left:490.5px;top:376.40px" width="18" height="12"><use href="#i-vars"/></svg>
<div class="a ui" style="left:507.5px;top:372.40px;color:#f4f6e2;font-size:16.2px">x</div>
<div class="a ui" style="left:618px;top:372.40px;color:#f4f6e2;font-size:16.4px">int</div>
<div class="a vm" style="left:737.5px;top:373.90px;color:#f4f6e2">2000</div>
<svg class="a" style="left:490.5px;top:398.15px" width="18" height="12"><use href="#i-var"/></svg>
<div class="a ui" style="left:507.5px;top:394.15px;color:#3c3c3c;font-size:16.2px">a</div>
<div class="a ui" style="left:618px;top:394.15px;color:#3c3c3c;font-size:16.4px">int</div>
<div class="a vm" style="left:737.5px;top:395.65px;color:#3c3c3c">0</div>
<svg class="a" style="left:490.5px;top:419.90px" width="18" height="12"><use href="#i-var"/></svg>
<div class="a ui" style="left:507.5px;top:415.90px;color:#3c3c3c;font-size:16.2px">b</div>
<div class="a ui" style="left:618px;top:415.90px;color:#3c3c3c;font-size:16.4px">int</div>
<div class="a vm" style="left:737.5px;top:417.40px;color:#3c3c3c">65535</div>
<svg class="a" style="left:490.5px;top:441.65px" width="18" height="12"><use href="#i-var"/></svg>
<div class="a ui" style="left:507.5px;top:437.65px;color:#3c3c3c;font-size:16.2px">c</div>
<div class="a ui" style="left:618px;top:437.65px;color:#3c3c3c;font-size:16.4px">int</div>
<div class="a vm" style="left:737.5px;top:439.15px;color:#3c3c3c">-960633736</div>
<svg class="a" style="left:490.5px;top:463.40px" width="18" height="12"><use href="#i-var"/></svg>
<div class="a ui" style="left:507.5px;top:459.40px;color:#3c3c3c;font-size:16.2px">exitVar</div>
<div class="a ui" style="left:618px;top:459.40px;color:#3c3c3c;font-size:16.4px">volatile int</div>
<div class="a vm" style="left:737.5px;top:460.90px;color:#3c3c3c">1</div>
<div class="a" style="left:598.5px;top:371.4px;width:0;height:109px;border-left:1px dotted #8c8c8c"></div>
<div class="a" style="left:718px;top:371.4px;width:0;height:109px;border-left:1px dotted #8c8c8c"></div>

<!-- detail pane -->
<div class="a" style="left:471px;top:515.5px;width:386px;height:2px;background:#e4e2df;border-left:1px solid #dcdad7"></div>
<div class="a" style="left:471px;top:517.5px;width:386px;height:58.5px;background:#f2f1f0;border-left:1px solid #dcdad7"></div>
<div class="a dm" style="left:473.2px;top:521px">2000</div>
<div class="a db" style="left:473.7px;top:538.3px">Hex:</div>
<div class="a dm" style="left:510.8px;top:539.5px">000007d0</div>
<div class="a dt" style="left:589.5px;top:539.5px">,</div>
<div class="a db" style="left:599.2px;top:538.3px">Dec:</div>
<div class="a dm" style="left:634.5px;top:539.5px">2000</div>
<div class="a dt" style="left:674px;top:539.5px">,</div>
<div class="a db" style="left:683px;top:538.3px">Oct:</div>
<div class="a dm" style="left:718px;top:539.5px">03720</div>
<div class="a db" style="left:473.7px;top:556.8px">Bin:</div>
<div class="a dm" style="left:505.6px;top:558px;width:351px;overflow:hidden">0000,0000,0000,0000,0000,0111,1101,0000</div>
<!-- detail hscroll -->
<div class="a" style="left:471px;top:576px;width:386px;height:13px;background:#f6f6f5;border-top:1px solid #dcdad7;border-left:1px solid #dcdad7"></div>
<svg class="a" style="left:480px;top:578px" width="8" height="10"><polygon points="6,1.5 6,9 2,5.2" fill="#888"/></svg>
<div class="a" style="left:503px;top:577px;width:1px;height:12px;background:#e6e4e1"></div>
<div class="a green" style="left:503.6px;top:577.5px;width:353.4px;height:11.5px"></div>
<div class="a" style="left:469px;top:589px;width:388px;height:4.6px;background:#e4eefa"></div>
<div class="a" style="left:469px;top:593.6px;width:388px;height:43.5px;background:#f2f1f0"></div>
<div class="a" style="left:469px;top:637px;width:388px;height:1px;background:#cfcdca"></div>
<div class="a" style="left:469px;top:638px;width:388px;height:2px;background:#e9e8e7"></div>
<div class="a green" style="left:469px;top:640px;width:388px;height:16px"></div>

<div class="a" style="left:676px;top:304px;width:32.5px;height:7.5px;background:#fbfbfb;border-left:1px solid #dcdad7;border-right:1px solid #e6e4e1"></div>
<div class="a" style="left:690px;top:304px;width:4px;height:1px;background:#777"></div>
<div class="a green" style="left:708.5px;top:304px;width:148.5px;height:4.8px"></div>
<div class="a" style="left:708.5px;top:308.8px;width:148.5px;height:2.7px;background:#fbfbfb"></div>

</body></html>
